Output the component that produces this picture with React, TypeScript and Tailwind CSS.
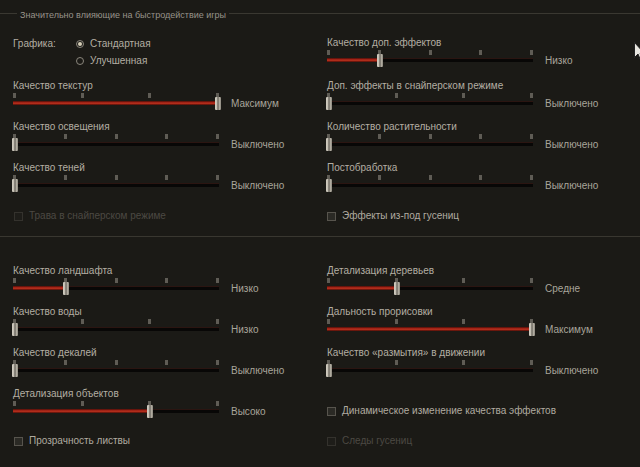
import React from 'react';

type SliderProps = {
  label: string;
  ticks: number;
  value: number;
  text: string;
  first?: boolean;
};

const TRACK_W = 206;
const RANGE = 203;

const Slider = ({ label, ticks, value, text, first }: SliderProps) => {
  const pos = (i: number) => Math.round((i * RANGE) / (ticks - 1));
  const thumb = pos(value);

  return (
    <div className={first ? 'h-[43px]' : 'h-[41px]'}>
      <div className="h-[14px] text-[10px] leading-[14px] text-[#b3aea3] whitespace-nowrap">{label}</div>
      <div className="flex h-[16px]">
        <div className="relative h-[16px] w-[206px] shrink-0">
          {Array.from({ length: ticks }).map((_, i) => (
            <div
              key={i}
              className="absolute top-0 h-[5px] w-[3px] bg-[#5f5c55]"
              style={{ left: pos(i) }}
            />
          ))}
          <div className="absolute left-0 top-[8px] h-[4px] w-[206px] border-t border-[#2b1511] bg-[#080706]" />
          {thumb > 0 && (
            <div
              className="absolute left-0 top-[8px] h-[4px] bg-[linear-gradient(180deg,#4a0d07_0%,#b3281a_45%,#c4331f_55%,#4a0d07_100%)]"
              style={{ width: thumb + 2 }}
            />
          )}
          <div
            className="absolute top-[4px] h-[13px] w-[6px] rounded-[1px] bg-[linear-gradient(90deg,#d2cdc1_0%,#c3beb2_30%,#5e5a52_50%,#b7b2a6_70%,#8c887e_100%)]"
            style={{ left: thumb - 1 }}
          />
        </div>
        <div className="ml-[12px] pt-[4px] text-[10px] leading-[14px] text-[#a9a59b] whitespace-nowrap">{text}</div>
      </div>
    </div>
  );
};

const Check = ({ label, disabled, className }: { label: string; disabled?: boolean; className?: string }) => (
  <div className={`flex h-[14px] items-center gap-[6px] ${className ?? ''}`}>
    <div
      className={
        disabled
          ? 'h-[9px] w-[9px] border border-[#34322d] bg-[#1e1d19]'
          : 'h-[9px] w-[9px] border border-[#57544d] bg-[#2b2a25]'
      }
    />
    <span className={`text-[10px] leading-[14px] whitespace-nowrap ${disabled ? 'text-[#4c4943]' : 'text-[#b0aba0]'}`}>
      {label}
    </span>
  </div>
);

const Radio = ({ label, checked }: { label: string; checked?: boolean }) => (
  <div className="flex h-[17px] items-center gap-[6px]">
    <div className="flex h-[8px] w-[8px] items-center justify-center rounded-full border border-[#8a867c]">
      {checked && <div className="h-[4px] w-[4px] rounded-full bg-[#d6cfb8]" />}
    </div>
    <span className="text-[10px] leading-[14px] text-[#b3aea3]">{label}</span>
  </div>
);

export default function App() {
  return (
    <div className="relative h-[467px] w-[640px] overflow-hidden bg-[#1b1a16] font-['Liberation_Sans',Arial,sans-serif]">
      {/* header */}
      <div className="flex h-[14px] items-start pt-0 mt-[8px]">
        <div className="mt-[5px] h-px w-[17px] bg-[#3a3831]" />
        <div className="px-[3px] text-[9px] leading-[14px] text-[#97938a] whitespace-nowrap">
          Значительно влияющие на быстродействие игры
        </div>
        <div className="mt-[5px] h-px flex-1 bg-[#3a3831]" />
      </div>

      {/* section 1 */}
      <div className="flex h-[214px]">
        <div className="w-[327px] pl-[13px] pt-[13px]">
          <div className="flex h-[44px]">
            <div className="w-[63px] h-[17px] text-[10px] leading-[17px] text-[#b3aea3]">Графика:</div>
            <div className="flex flex-col">
              <Radio label="Стандартная" checked />
              <Radio label="Улучшенная" />
            </div>
          </div>
          <Slider label="Качество текстур" ticks={4} value={3} text="Максимум" />
          <Slider label="Качество освещения" ticks={5} value={0} text="Выключено" />
          <Slider label="Качество теней" ticks={5} value={0} text="Выключено" />
          <Check label="Трава в снайперском режиме" disabled className="mt-[7px] ml-[1px]" />
        </div>
        <div className="flex-1 pt-[14px]">
          <Slider label="Качество доп. эффектов" ticks={5} value={1} text="Низко" first />
          <Slider label="Доп. эффекты в снайперском режиме" ticks={4} value={0} text="Выключено" />
          <Slider label="Количество растительности" ticks={5} value={0} text="Выключено" />
          <Slider label="Постобработка" ticks={5} value={0} text="Выключено" />
          <Check label="Эффекты из-под гусениц" className="mt-[7px]" />
        </div>
      </div>

      <div className="h-px w-full bg-[#393730]" />

      {/* section 2 */}
      <div className="flex pt-[27px]">
        <div className="w-[327px] pl-[13px]">
          <Slider label="Качество ландшафта" ticks={5} value={1} text="Низко" />
          <Slider label="Качество воды" ticks={4} value={0} text="Низко" />
          <Slider label="Качество декалей" ticks={5} value={0} text="Выключено" />
          <Slider label="Детализация объектов" ticks={4} value={2} text="Высоко" />
          <Check label="Прозрачность листвы" className="mt-[6px] ml-[1px]" />
        </div>
        <div className="flex-1">
          <Slider label="Детализация деревьев" ticks={4} value={1} text="Средне" />
          <Slider label="Дальность прорисовки" ticks={4} value={3} text="Максимум" />
          <Slider label="Качество «размытия» в движении" ticks={4} value={0} text="Выключено" />
          <Check label="Динамическое изменение качества эффектов" className="mt-[17px]" />
          <Check label="Следы гусениц" disabled className="mt-[16px]" />
        </div>
      </div>

      {/* mouse cursor */}
      <svg className="absolute left-[634px] top-[42px]" width="12" height="19" viewBox="0 0 12 19">
        <path d="M0.5 0.5 L0.5 15.5 L4 12 L6.5 18 L8.5 17 L6 11.5 L10.5 11.5 Z" fill="#e8e6e0" stroke="#222" strokeWidth="1" />
      </svg>
    </div>
  );
}
